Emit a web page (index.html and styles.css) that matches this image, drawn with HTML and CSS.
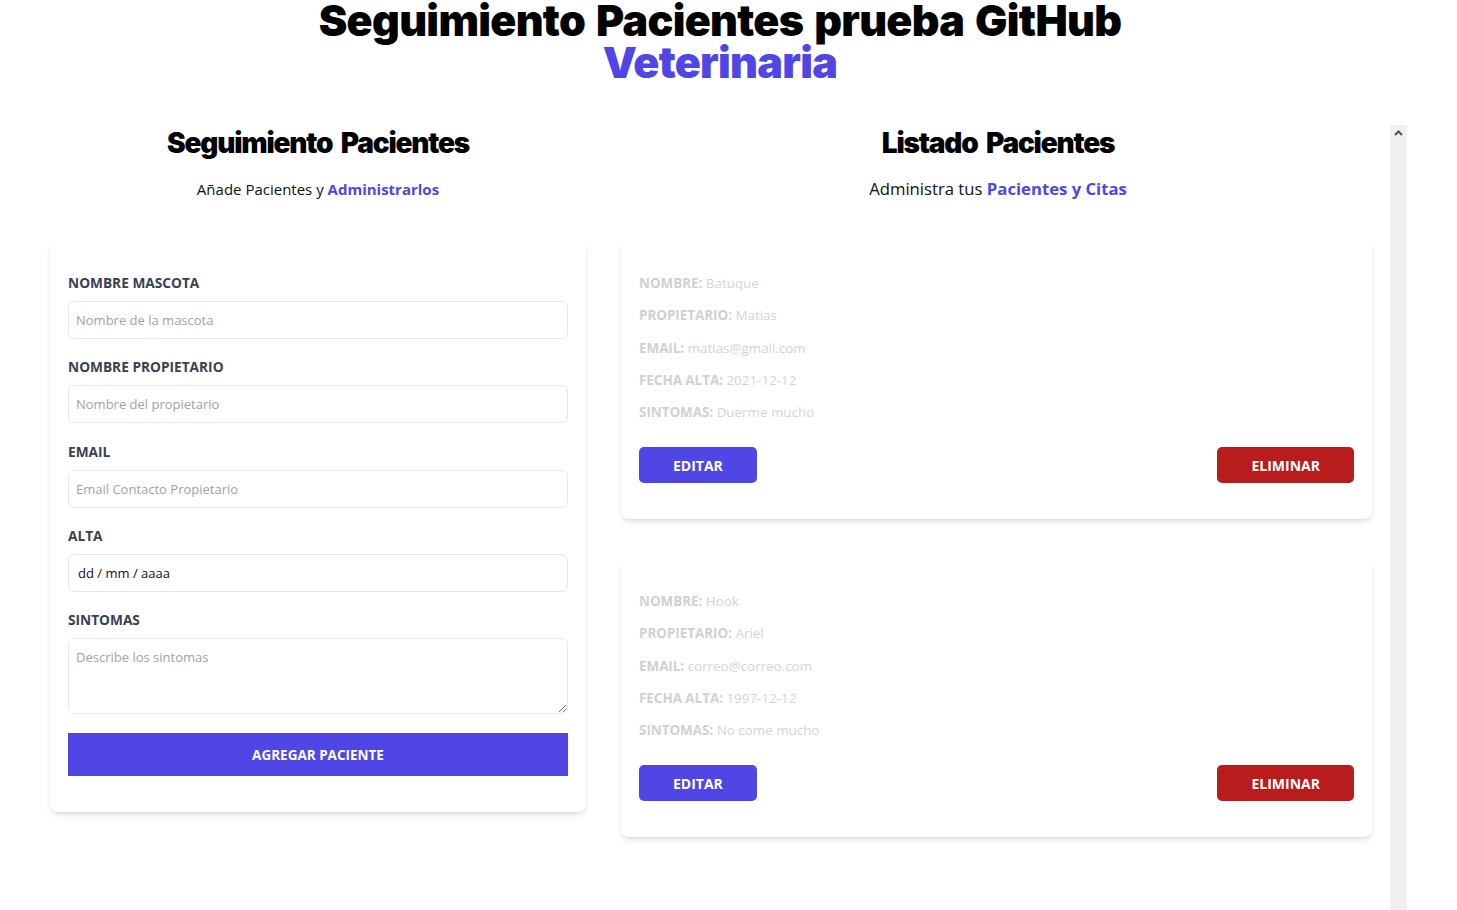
FILE: index.html
```html
<!DOCTYPE html>
<html lang="es">
<head>
<meta charset="utf-8">
<title>Seguimiento Pacientes</title>
<link rel="stylesheet" href="styles.css">
</head>
<body>
<div class="page">
  <h1 class="title">Seguimiento Pacientes prueba GitHub <span class="title-accent">Veterinaria</span></h1>
  <div class="main">
    <section class="col-form">
      <h2 class="col-title">Seguimiento Pacientes</h2>
      <p class="lead">Añade Pacientes y <span class="accent">Administrarlos</span></p>
      <form class="card form-card">
        <div class="field">
          <label class="label" for="mascota">Nombre Mascota</label>
          <input class="input" id="mascota" type="text" placeholder="Nombre de la mascota">
        </div>
        <div class="field">
          <label class="label" for="propietario">Nombre Propietario</label>
          <input class="input" id="propietario" type="text" placeholder="Nombre del propietario">
        </div>
        <div class="field">
          <label class="label" for="email">Email</label>
          <input class="input" id="email" type="email" placeholder="Email Contacto Propietario">
        </div>
        <div class="field">
          <label class="label" for="alta">Alta</label>
          <input class="input input-date" id="alta" type="text" placeholder="dd / mm / aaaa">
        </div>
        <div class="field">
          <label class="label" for="sintomas">Sintomas</label>
          <textarea class="input textarea" id="sintomas" placeholder="Describe los sintomas"></textarea>
        </div>
        <button class="btn-submit" type="button">Agregar Paciente</button>
      </form>
    </section>
    <section class="col-list">
      <div class="list-scroll">
        <h2 class="col-title">Listado Pacientes</h2>
        <p class="lead lead-lg">Administra tus <span class="accent">Pacientes y Citas</span></p>
        <div class="card patient">
          <p class="row"><b>Nombre:</b> Batuque</p>
          <p class="row"><b>Propietario:</b> Matias</p>
          <p class="row"><b>Email:</b> matias@gmail.com</p>
          <p class="row"><b>Fecha Alta:</b> 2021-12-12</p>
          <p class="row"><b>Sintomas:</b> Duerme mucho</p>
          <div class="actions">
            <button class="btn btn-edit" type="button">Editar</button>
            <button class="btn btn-delete" type="button">Eliminar</button>
          </div>
        </div>
        <div class="card patient">
          <p class="row"><b>Nombre:</b> Hook</p>
          <p class="row"><b>Propietario:</b> Ariel</p>
          <p class="row"><b>Email:</b> correo@correo.com</p>
          <p class="row"><b>Fecha Alta:</b> 1997-12-12</p>
          <p class="row"><b>Sintomas:</b> No come mucho</p>
          <div class="actions">
            <button class="btn btn-edit" type="button">Editar</button>
            <button class="btn btn-delete" type="button">Eliminar</button>
          </div>
        </div>
      </div>
      <div class="scroll-track" aria-hidden="true">
        <svg class="scroll-arrow" width="17" height="17" viewBox="0 0 17 17"><path d="M5 10 L8.5 6.5 L12 10" fill="none" stroke="#505050" stroke-width="2"/></svg>
      </div>
    </section>
  </div>
</div>
</body>
</html>
```

FILE: styles.css
```css
* { box-sizing: border-box; }

html, body {
  margin: 0;
  padding: 0;
  background: #ffffff;
  overflow: hidden;
}

body {
  font-family: "Open Sans", "Noto Sans", sans-serif;
  color: #111827;
}

.page {
  width: 1440px;
}

.title {
  margin: -1px 0 0;
  font-family: Inter, "Noto Sans", sans-serif;
  font-weight: 900;
  font-size: 43px;
  letter-spacing: -0.7px;
  word-spacing: 3px;
  line-height: 42px;
  text-align: center;
  color: #000000;
}

.title-accent {
  display: block;
  color: #4f46e5;
}

.main {
  display: flex;
  align-items: flex-start;
  padding-left: 30px;
  margin-top: 42px;
}

.col-form {
  width: 576px;
  flex: none;
}

.col-list {
  width: 801px;
  flex: none;
  height: 785px;
  display: flex;
  overflow: hidden;
}

.list-scroll {
  flex: 1;
  min-width: 0;
  overflow-y: auto;
}

.scroll-track {
  width: 17px;
  flex: none;
  background: #f0f0f0;
}

.scroll-arrow {
  display: block;
}

.col-title {
  margin: 0;
  font-family: Inter, "Noto Sans", sans-serif;
  font-weight: 900;
  font-size: 28px;
  letter-spacing: -1.2px;
  word-spacing: 4px;
  line-height: 36px;
  text-align: center;
  color: #000000;
}

.lead {
  margin: 14px 0 0;
  font-size: 15px;
  line-height: 28px;
  text-align: center;
  color: #111111;
}

.lead-lg {
  font-size: 16.7px;
}

.accent {
  color: #4f46e5;
  font-weight: 700;
}

.card {
  background: #ffffff;
  border-radius: 8px;
  box-shadow: 0 4px 6px -1px rgba(0,0,0,0.1), 0 2px 4px -2px rgba(0,0,0,0.1);
}

.form-card {
  margin: 37px 20px 40px;
  padding: 33px 18px 36px;
}

.field {
  margin-bottom: 18.25px;
}

.label {
  display: block;
  font-size: 13.7px;
  line-height: 20px;
  font-weight: 700;
  text-transform: uppercase;
  color: #374151;
}

.input {
  display: block;
  width: 100%;
  margin-top: 8px;
  height: 38px;
  padding: 0 7px;
  border: 1.5px solid #e5e7eb;
  border-radius: 6px;
  font-family: "Open Sans", "Noto Sans", sans-serif;
  font-size: 13px;
  color: #111827;
  background: #ffffff;
  outline: none;
}

.input::placeholder {
  color: #9ca3af;
}

.input-date {
  padding-left: 9px;
}

.input-date::placeholder {
  color: #111111;
}

.textarea {
  height: 76px;
  padding: 9px 7px;
  resize: vertical;
}

.btn-submit {
  display: block;
  width: 100%;
  height: 43px;
  margin-top: 19px;
  border: 0;
  background: #4f46e5;
  color: #ffffff;
  font-family: "Open Sans", "Noto Sans", sans-serif;
  font-size: 13.5px;
  font-weight: 700;
  text-transform: uppercase;
}

.patient {
  margin: 37px 18px 39px 15px;
  padding: 33px 18px 36px;
}

.patient + .patient {
  margin-top: 0;
}

.row {
  margin: 0 0 12.25px;
  font-size: 13.4px;
  line-height: 20px;
  color: #d1d5db;
}

.row b {
  font-weight: 700;
  text-transform: uppercase;
  color: #cdd1d8;
}

.actions {
  display: flex;
  justify-content: space-between;
  margin-top: 25px;
}

.btn {
  height: 36px;
  padding: 0 34px;
  border: 0;
  border-radius: 5px;
  color: #ffffff;
  font-family: "Open Sans", "Noto Sans", sans-serif;
  font-size: 14px;
  font-weight: 700;
  text-transform: uppercase;
}

.btn-edit {
  background: #4f46e5;
}

.btn-delete {
  background: #b91c1c;
}
```
